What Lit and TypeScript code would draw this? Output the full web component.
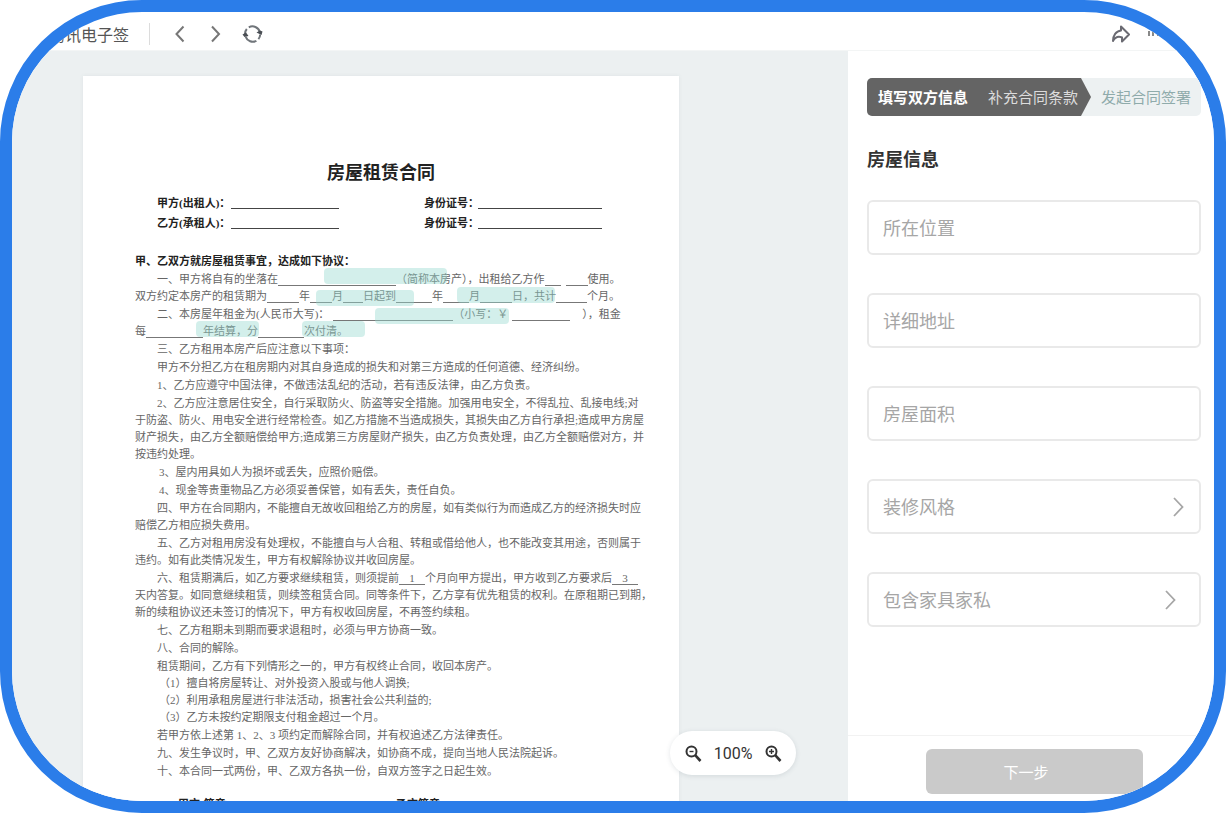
import { LitElement, html, css, svg } from "lit";
import { customElement, state } from "lit/decorators.js";
import { classMap } from "lit/directives/class-map.js";

/** A run of text, a blank to fill in (width in px, optional value), or a plain gap. */
type Segment = string | { blank: number; value?: string } | { gap: number };
interface Clause {
  lines: Segment[][];
  /** Numbered items that belong to the clause, one line each. */
  items?: string[];
  sub?: boolean;
}

const b = (blank: number, value = ""): Segment => ({ blank, value });
const g = (gap: number): Segment => ({ gap });

const CLAUSES: Clause[] = [
  {
    lines: [
      ["一、甲方将自有的坐落在", b(118), "（简称本房产），出租给乙方作", b(16), g(5), b(22), "使用。"],
      ["双方约定本房产的租赁期为", b(32), "年", b(22), "月", b(20), "日起到", b(36), "年", b(26), "月", b(32), "日，共计", b(31), "个月。"],
    ],
  },
  {
    lines: [
      ["二、本房屋年租金为(人民币大写)：", g(4), b(120), "（小写：￥", g(4), b(58), g(12), "），租金"],
      ["每", b(57), "年结算，分", b(46), "次付清。"],
    ],
  },
  { lines: [["三、乙方租用本房产后应注意以下事项："]] },
  { lines: [["甲方不分担乙方在租房期内对其自身造成的损失和对第三方造成的任何道德、经济纠纷。"]] },
  { lines: [["1、乙方应遵守中国法律，不做违法乱纪的活动，若有违反法律，由乙方负责。"]] },
  {
    lines: [
      ["2、乙方应注意居住安全，自行采取防火、防盗等安全措施。加强用电安全，不得乱拉、乱接电线;对"],
      ["于防盗、防火、用电安全进行经常检查。如乙方措施不当造成损失，其损失由乙方自行承担;造成甲方房屋"],
      ["财产损失，由乙方全额赔偿给甲方;造成第三方房屋财产损失，由乙方负责处理，由乙方全额赔偿对方，并"],
      ["按违约处理。"],
    ],
  },
  { sub: true, lines: [["3、屋内用具如人为损坏或丢失，应照价赔偿。"]] },
  { sub: true, lines: [["4、现金等贵重物品乙方必须妥善保管，如有丢失，责任自负。"]] },
  {
    lines: [
      ["四、甲方在合同期内，不能擅自无故收回租给乙方的房屋，如有类似行为而造成乙方的经济损失时应"],
      ["赔偿乙方相应损失费用。"],
    ],
  },
  {
    lines: [
      ["五、乙方对租用房没有处理权，不能擅自与人合租、转租或借给他人，也不能改变其用途，否则属于"],
      ["违约。如有此类情况发生，甲方有权解除协议并收回房屋。"],
    ],
  },
  {
    lines: [
      ["六、租赁期满后，如乙方要求继续租赁，则须提前", b(26, "1"), "个月向甲方提出，甲方收到乙方要求后", b(26, "3")],
      ["天内答复。如同意继续租赁，则续签租赁合同。同等条件下，乙方享有优先租赁的权利。在原租期已到期，"],
      ["新的续租协议还未签订的情况下，甲方有权收回房屋，不再签约续租。"],
    ],
  },
  { lines: [["七、乙方租期未到期而要求退租时，必须与甲方协商一致。"]] },
  { lines: [["八、合同的解除。"]] },
  {
    lines: [["租赁期间，乙方有下列情形之一的，甲方有权终止合同，收回本房产。"]],
    items: [
      "（1）擅自将房屋转让、对外投资入股或与他人调换;",
      "（2）利用承租房屋进行非法活动，损害社会公共利益的;",
      "（3）乙方未按约定期限支付租金超过一个月。",
    ],
  },
  { lines: [["若甲方依上述第 1、2、3 项约定而解除合同，并有权追述乙方法律责任。"]] },
  { lines: [["九、发生争议时，甲、乙双方友好协商解决，如协商不成，提向当地人民法院起诉。"]] },
  { lines: [["十、本合同一式两份，甲、乙双方各执一份，自双方签字之日起生效。"]] },
];

const STEPS = ["填写双方信息", "补充合同条款", "发起合同签署"];

const FIELDS = [
  { id: "location", label: "所在位置", kind: "text" },
  { id: "address", label: "详细地址", kind: "text" },
  { id: "area", label: "房屋面积", kind: "text" },
  { id: "style", label: "装修风格", kind: "select" },
  { id: "furniture", label: "包含家具家私", kind: "select", inset: true },
];

const magnifier = (plus: boolean) => html`<svg viewBox="0 0 18 18" width="18" height="18" fill="none" stroke="#333" stroke-width="2" aria-hidden="true">
  <circle cx="7.5" cy="7.5" r="5"></circle>
  <path d="M11.2 11.2L16.500 17" stroke-width="2.6"></path>
  ${plus ? svg`<path d="M5 7.5h5M7.5 5v5" stroke-width="1.4"></path>` : svg`<path d="M5.5 7.5h4" stroke-width="1.4"></path>`}
</svg>`;

@customElement("contract-paper")
class ContractPaper extends LitElement {
  static styles = css`
    :host {
      display: block;
      position: relative;
      box-sizing: border-box;
      padding: 84px 32px 0 52px;
      background: #fff;
      box-shadow: 0 0 4px rgba(60, 90, 100, 0.08);
      color: #666;
      font-family: "Liberation Serif", "Noto Sans CJK SC", serif;
      font-size: 11px;
      line-height: 17px;
      white-space: nowrap;
    }
    .title {
      margin: 0 20px 0 0;
      color: #222;
      font-size: 18px;
      line-height: 26px;
      text-align: center;
      font-weight: 700;
    }
    .parties {
      display: grid;
      grid-template-columns: 267px 1fr;
      margin: 7px 0 0 22px;
      line-height: 20px;
      color: #222;
      font-weight: 700;
    }
    .party {
      display: flex;
      gap: 4px;
    }
    .party .name {
      width: 70px;
    }
    .party .id {
      width: 50px;
    }
    .rule {
      height: 15px;
      width: 108px;
      border-bottom: 1px solid #444;
    }
    .rule.long {
      width: 124px;
    }
    .lead {
      margin: 20px 0 1px;
      color: #222;
      font-weight: 700;
    }
    .clauses {
      display: flex;
      flex-direction: column;
      gap: 1px;
    }
    .clause {
      margin: 0;
    }
    .line {
      display: flex;
      height: 17px;
      white-space: pre;
    }
    .line.first {
      padding-left: 22px;
    }
    .sub .line.first,
    .line.item {
      padding-left: 24px;
    }
    .blank {
      flex: none;
      box-sizing: border-box;
      height: 15px;
      border-bottom: 1px solid #777;
      text-align: center;
    }
    .gap {
      flex: none;
    }
    .mark {
      position: absolute;
      height: 16px;
      border-radius: 4px;
      background: rgba(150, 218, 208, 0.42);
    }
    .sign {
      display: grid;
      grid-template-columns: 218px 1fr;
      margin: 16px 0 0 43px;
      color: #222;
      font-weight: 700;
    }
  `;

  private marks = [
    { x: 241, y: 192, w: 123 },
    { x: 233, y: 214, w: 98 },
    { x: 374, y: 211, w: 98 },
    { x: 292, y: 232, w: 134 },
    { x: 113, y: 245, w: 63 },
    { x: 219, y: 245, w: 63 },
  ];

  private segment(s: Segment) {
    if (typeof s === "string") return html`<span>${s}</span>`;
    if ("gap" in s) return html`<span class="gap" style="width:${s.gap}px"></span>`;
    return html`<span class="blank" style="width:${s.blank}px">${s.value}</span>`;
  }

  render() {
    return html`
      <h1 class="title">房屋租赁合同</h1>
      <div class="parties">
        ${["甲方(出租人)：", "乙方(承租人)："].map(
          (name) => html`
            <div class="party"><span class="name">${name}</span><span class="rule"></span></div>
            <div class="party"><span class="id">身份证号：</span><span class="rule long"></span></div>
          `
        )}
      </div>
      <p class="lead">甲、乙双方就房屋租赁事宜，达成如下协议：</p>
      <div class="clauses">
        ${CLAUSES.map(
          (c) => html`<p class=${classMap({ clause: true, sub: !!c.sub })}>
            ${c.lines.map(
              (l, i) => html`<span class=${classMap({ line: true, first: i === 0 })}>${l.map((s) => this.segment(s))}</span>`
            )}
            ${(c.items ?? []).map((t) => html`<span class="line item">${t}</span>`)}
          </p>`
        )}
      </div>
      <div class="sign"><span>甲方(签章)</span><span>乙方签章</span></div>
      ${this.marks.map((m) => html`<span class="mark" style="left:${m.x}px;top:${m.y}px;width:${m.w}px"></span>`)}
    `;
  }
}

@customElement("info-panel")
class InfoPanel extends LitElement {
  static styles = css`
    :host {
      display: flex;
      flex-direction: column;
      background: #fff;
      min-height: 0;
    }
    .body {
      flex: 1;
      min-height: 0;
      padding: 27px 13px 0 19px;
    }
    .steps {
      display: flex;
      height: 38px;
      border-radius: 5px;
      overflow: hidden;
      background: #edf1f2;
      font-size: 15px;
      line-height: 38px;
      white-space: nowrap;
    }
    .done {
      display: flex;
      gap: 20px;
      box-sizing: border-box;
      width: 224px;
      padding-left: 11px;
      background: #646464;
      clip-path: polygon(0 0, 214px 0, 100% 50%, 214px 100%, 0 100%);
      color: #dcdcdc;
    }
    .current {
      color: #fff;
      font-weight: 700;
    }
    .next {
      padding-left: 10px;
      color: #8fabab;
    }
    .heading {
      margin: 28px 0 0;
      font-size: 18px;
      line-height: 28px;
      color: #333;
      font-weight: 700;
    }
    .form {
      display: flex;
      flex-direction: column;
      gap: 38px;
      margin-top: 28px;
    }
    .field {
      position: relative;
      display: block;
    }
    .control {
      display: block;
      box-sizing: border-box;
      width: 100%;
      height: 55px;
      padding: 0 14px;
      border: 2px solid #e9e9e9;
      border-radius: 6px;
      background: #fff;
      color: #555;
      font: inherit;
      font-size: 18px;
      appearance: none;
      outline: none;
    }
    .label {
      position: absolute;
      left: 16px;
      top: 14px;
      font-size: 18px;
      line-height: 26px;
      color: #a6a6a6;
      pointer-events: none;
    }
    .control:focus + .label,
    .control:not(:placeholder-shown):valid:not(select) + .label,
    select.control:valid + .label {
      visibility: hidden;
    }
    .arrow {
      position: absolute;
      right: 16px;
      top: 18px;
      pointer-events: none;
    }
    .arrow.inset {
      right: 24px;
    }
    .footer {
      display: flex;
      justify-content: center;
      padding: 13px 13px 7px 19px;
      border-top: 1px solid #f2f2f2;
    }
    .submit {
      width: 217px;
      height: 45px;
      padding: 0 16px 0 0;
      border: 0;
      border-radius: 6px;
      background: #cacaca;
      color: #fff;
      font: inherit;
      font-size: 15px;
    }
  `;

  render() {
    return html`
      <div class="body">
        <div class="steps" role="list" aria-label="步骤">
          <div class="done">
            <span class="current" role="listitem" aria-current="step">${STEPS[0]}</span>
            <span role="listitem">${STEPS[1]}</span>
          </div>
          <span class="next" role="listitem">${STEPS[2]}</span>
        </div>
        <h2 class="heading">房屋信息</h2>
        <form class="form">
          ${FIELDS.map(
            (f) => html`<div class="field">
              ${f.kind === "text"
                ? html`<input class="control" id=${f.id} type="text" placeholder=" " />`
                : html`<select class="control" id=${f.id} required><option value="" selected></option></select>`}
              <label class="label" for=${f.id}>${f.label}</label>
              ${f.kind === "select"
                ? html`<svg class=${classMap({ arrow: true, inset: !!f.inset })} viewBox="0 0 14 20" width="14" height="20" fill="none" stroke="#a6a6a6" stroke-width="1.8" aria-hidden="true">
                    <path d="M3 1L11.500 10L3 19"></path>
                  </svg>`
                : ""}
            </div>`
          )}
        </form>
      </div>
      <div class="footer"><button class="submit" type="button">下一步</button></div>
    `;
  }
}

@customElement("app-root")
class AppRoot extends LitElement {
  static styles = css`
    :host {
      display: block;
      box-sizing: border-box;
      height: 100vh;
      padding-bottom: 1px;
      background: #fff;
      font-family: "Noto Sans CJK SC", sans-serif;
    }
    .frame {
      box-sizing: border-box;
      height: 100%;
      display: flex;
      flex-direction: column;
      border: 12px solid #2b7de9;
      border-radius: 142px;
      overflow: hidden;
      background: #fff;
    }
    .bar {
      display: flex;
      align-items: center;
      flex: none;
      height: 39px;
      padding: 5px 48px 0 37px;
      box-sizing: border-box;
      border-bottom: 1px solid #f3f5f5;
      color: #555;
    }
    .brand {
      font-size: 16px;
      line-height: 24px;
      white-space: nowrap;
    }
    .divider {
      width: 1px;
      height: 22px;
      margin: 0 19px 0 20px;
      background: #dcdcdc;
    }
    .nav {
      display: flex;
      gap: 14px;
      flex: 1;
    }
    .actions {
      display: flex;
      gap: 12px;
    }
    .icon {
      display: flex;
      align-items: center;
      justify-content: center;
      padding: 0;
      width: 22px;
      height: 22px;
      border: 0;
      background: none;
    }
    .main {
      flex: 1;
      min-height: 0;
      display: grid;
      grid-template-columns: minmax(0, 1fr) 366px;
    }
    .stage {
      position: relative;
      min-height: 0;
      overflow: hidden;
      padding: 25px 169px 0 71px;
      background: #ecf0f1;
    }
    .zoom {
      position: absolute;
      right: 52px;
      bottom: 26px;
      display: flex;
      align-items: center;
      justify-content: center;
      gap: 10px;
      width: 126px;
      height: 44px;
      border-radius: 22px;
      background: #fff;
      box-shadow: 0 1px 5px rgba(60, 80, 90, 0.14);
      color: #333;
      font-family: Roboto, sans-serif;
      font-size: 16px;
    }
  `;

  @state() private scale = 100;

  render() {
    return html`
      <div class="frame">
        <header class="bar">
          <span class="brand">腾讯电子签</span>
          <span class="divider"></span>
          <nav class="nav">
            <button class="icon" aria-label="后退">
              <svg viewBox="0 0 22 22" width="22" height="22" fill="none" stroke="#777" stroke-width="2"><path d="M14.500 3.500L7.500 11L14.500 18.500"></path></svg>
            </button>
            <button class="icon" aria-label="前进">
              <svg viewBox="0 0 22 22" width="22" height="22" fill="none" stroke="#777" stroke-width="2"><path d="M7 3.500L14 11L7 18.500"></path></svg>
            </button>
            <button class="icon" aria-label="刷新">
              <svg viewBox="0 0 22 22" width="22" height="22" fill="none" stroke="#70757a" stroke-width="2">
                <path d="M4 11A7.600 7.600 0 0 1 5.800 6M7.800 4.300A7.600 7.600 0 0 1 18.800 9M19.200 11.500A7.600 7.600 0 0 1 17.400 16.200M15.400 17.900A7.600 7.600 0 0 1 4.700 13.800"></path>
                <path d="M1.500 11.500L5 9.500L7.500 13L3.500 14zM15.500 9.500L19 7.500L21.500 8.500L20.500 12z" fill="#4a4e54" stroke="none"></path>
              </svg>
            </button>
          </nav>
          <div class="actions">
            <button class="icon" aria-label="分享">
              <svg viewBox="0 0 22 22" width="22" height="22" fill="none" stroke="#6a6a72" stroke-width="2" stroke-linejoin="round">
                <path d="M11 3.500L19 11.500L12 18.500V14.500C8.500 13 5 14.500 3 18C3 12.500 6 8 11 7.500Z"></path>
              </svg>
            </button>
            <button class="icon" aria-label="更多">
              <svg viewBox="0 0 22 22" width="22" height="22" fill="none" stroke="#888" stroke-width="2">
                <path d="M5 13V8M9 13V8H14V13M18 13V8"></path>
              </svg>
            </button>
          </div>
        </header>
        <main class="main">
          <section class="stage">
            <contract-paper></contract-paper>
            <div class="zoom">
              <button class="icon" aria-label="缩小" @click=${() => (this.scale -= 10)}>${magnifier(false)}</button>
              <span>${this.scale}%</span>
              <button class="icon" aria-label="放大" @click=${() => (this.scale += 10)}>${magnifier(true)}</button>
            </div>
          </section>
          <info-panel></info-panel>
        </main>
      </div>
    `;
  }
}
